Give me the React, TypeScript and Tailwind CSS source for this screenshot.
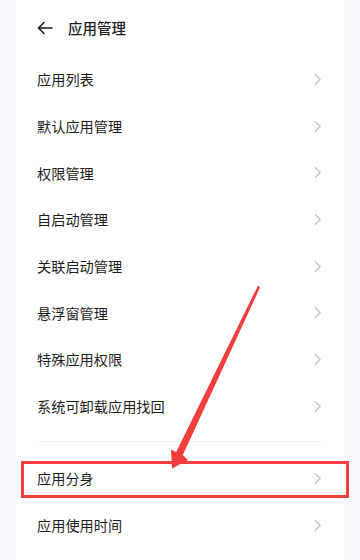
const font = { fontFamily: '"Noto Sans CJK SC", "Noto Sans", sans-serif' };

const group1 = ["应用列表", "默认应用管理", "权限管理", "自启动管理", "关联启动管理", "悬浮窗管理", "特殊应用权限", "系统可卸载应用找回"];
const group2 = ["应用分身", "应用使用时间"];

const Chevron = () => (
  <svg width="8" height="13" viewBox="0 0 8 13" fill="none">
    <polyline points="1.2,1.5 6.2,6.5 1.2,11.5" stroke="#c6c6c6" strokeWidth="1.3" strokeLinejoin="round" strokeLinecap="round" />
  </svg>
);

const Row = ({ label, h }: { label: string; h: string }) => (
  <div className={`flex items-center justify-between pl-[21px] pr-[22px] ${h}`}>
    <span className="text-[14.2px] text-[#1c1c1c] leading-none">{label}</span>
    <Chevron />
  </div>
);

export default function App() {
  return (
    <div className="relative w-[360px] h-[560px] overflow-hidden bg-[#f7f8fc] px-4" style={font}>
      <div className="h-full bg-white">
        <div className="flex items-center h-[56px] pl-[21px]">
          <svg width="16" height="14" viewBox="0 0 16 14" fill="none">
            <path d="M15 7H1.5M7 1.5L1.5 7L7 12.5" stroke="#1c1c1c" strokeWidth="1.5" strokeLinecap="round" strokeLinejoin="round" />
          </svg>
          <span className="ml-[15px] text-[14.5px] font-medium text-[#1c1c1c] leading-none">应用管理</span>
        </div>
        {group1.map((t) => (
          <Row key={t} label={t} h="h-[46.7px]" />
        ))}
        <div className="h-[25.3px] pt-[11.4px]">
          <div className="ml-[21px] mr-[22px] h-px bg-[#f2f2f2]" />
        </div>
        {group2.map((t) => (
          <Row key={t} label={t} h="h-[47px]" />
        ))}
      </div>

      {/* annotation */}
      <div className="absolute left-[21px] top-[461px] w-[328px] h-[37px] border-[3px] border-[#f43d3d]" />
      <svg className="absolute left-0 top-0" width="360" height="560" viewBox="0 0 360 560">
        <polygon
          points="258,285.5 260,287.5 182.8,455 188,460 172,468.5 171,449.5 176.2,452"
          fill="#f43d3d"
        />
      </svg>
    </div>
  );
}
